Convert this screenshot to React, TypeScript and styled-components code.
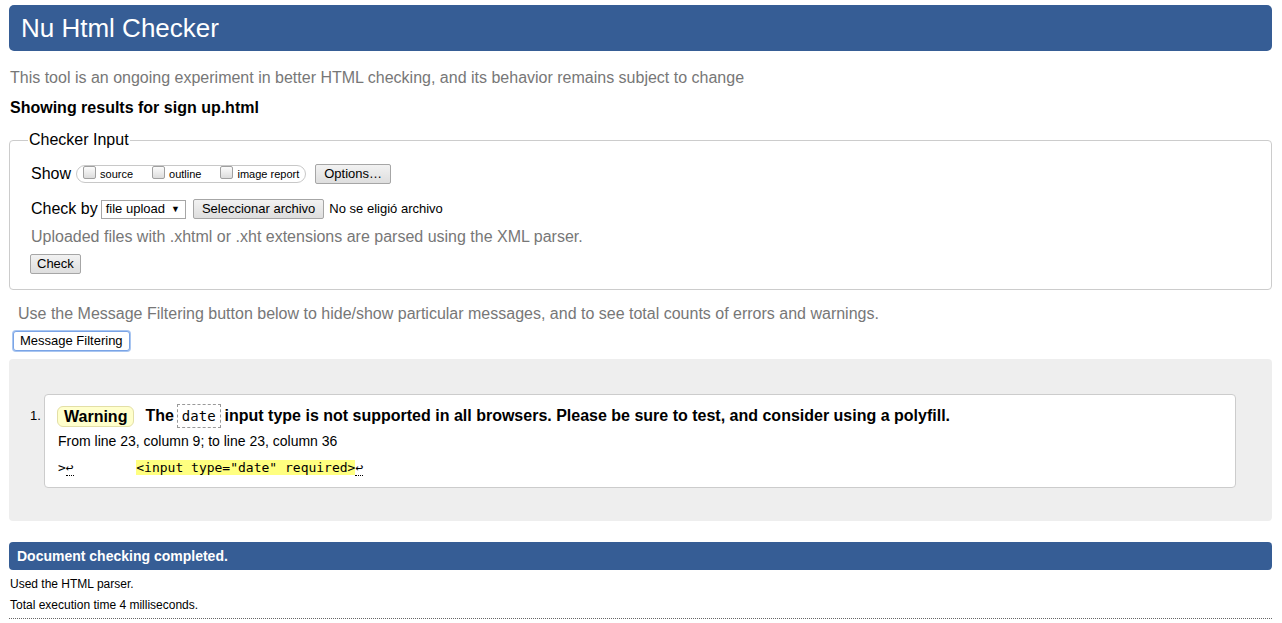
import React from 'react';
import styled, { createGlobalStyle } from 'styled-components';

const Global = createGlobalStyle`
  html, body { margin: 0; padding: 0; background: #fff; }
  body { font-family: "Liberation Sans", Arial, sans-serif; color: #000; }
`;

const Page = styled.div`
  padding: 5px 10px 0 9px;
`;

const Header = styled.h1`
  margin: 0;
  height: 46px;
  display: flex;
  align-items: center;
  padding-left: 12px;
  background: #365d95;
  border-radius: 5px;
  color: #fff;
  font-size: 26px;
  font-weight: normal;
`;

const Para = styled.p<{ $top: number; $left?: number; $muted?: boolean; $bold?: boolean }>`
  margin: ${(p) => p.$top}px 0 0 ${(p) => p.$left ?? 1}px;
  font-size: 16px;
  line-height: 20px;
  color: ${(p) => (p.$muted ? '#777' : '#000')};
  font-weight: ${(p) => (p.$bold ? 'bold' : 'normal')};
`;

const Fieldset = styled.fieldset`
  margin: 13px 0 0;
  padding: 0 20px 15px 21px;
  border: 1px solid #ccc;
  border-radius: 4px;
`;

const Legend = styled.legend`
  font-size: 16px;
  line-height: 18px;
  padding: 0 1px;
  margin-left: -3px;
`;

const Row = styled.div<{ $top: number }>`
  display: flex;
  align-items: center;
  margin-top: ${(p) => p.$top}px;
  font-size: 16px;
  line-height: 20px;
`;

const Pill = styled.span`
  display: inline-flex;
  align-items: center;
  gap: 19px;
  height: 16px;
  margin-left: 5px;
  padding: 0 6px;
  border: 1px solid #c8c8c8;
  border-radius: 9px;
`;

const Opt = styled.label`
  display: inline-flex;
  align-items: center;
  font-size: 11px;
  line-height: 14px;
`;

const Box = styled.span`
  display: inline-block;
  width: 11px;
  height: 11px;
  margin-right: 4px;
  margin-top: -3px;
  border: 1px solid #a0a0a0;
  border-radius: 2px;
  background: linear-gradient(#fcfcfc, #dcdcdc);
`;

const Button = styled.button<{ $left?: number; $pad?: number; $focus?: boolean }>`
  margin: 0 0 0 ${(p) => p.$left ?? 0}px;
  height: 20px;
  padding: 0 ${(p) => p.$pad ?? 6}px;
  font-family: "Liberation Sans", Arial, sans-serif;
  font-size: 13px;
  line-height: 16px;
  color: #000;
  background: ${(p) => (p.$focus ? '#fff' : 'linear-gradient(#f2f2f2, #dedede)')};
  border: 1px solid ${(p) => (p.$focus ? '#7aa4e6' : '#a6a6a6')};
  box-shadow: ${(p) => (p.$focus ? '0 0 0 1px #a9c6f1' : 'none')};
  border-radius: ${(p) => (p.$focus ? '3px' : '2px')};
`;

const Select = styled.span`
  display: inline-flex;
  align-items: center;
  gap: 6px;
  height: 17px;
  margin-left: 3px;
  padding: 0 5px 0 4px;
  border: 1px solid #a6a6a6;
  background: #fff;
  font-size: 13px;
`;

const Arrow = styled.span`
  font-size: 9px;
`;

const Small = styled.span`
  margin-left: 5px;
  font-size: 13px;
`;

const CheckRow = styled.div`
  margin-top: 7px;
  margin-left: -1px;
`;

const Results = styled.div`
  margin-top: 8px;
  display: flex;
  padding: 35px 36px 33px 21px;
  background: #eee;
  border-radius: 4px;
`;

const Marker = styled.span`
  width: 14px;
  padding-top: 14px;
  font-size: 13px;
`;

const Card = styled.div`
  flex: 1;
  padding: 9px 12px 11px 12px;
  background: #fff;
  border: 1px solid #ccc;
  border-radius: 4px;
`;

const Title = styled.div`
  display: flex;
  align-items: center;
  font-size: 16px;
  font-weight: bold;
  line-height: 24px;
`;

const Badge = styled.span`
  display: inline-block;
  height: 19px;
  line-height: 19px;
  padding: 0 6px;
  margin-right: 11px;
  background: #ffc;
  border: 1px solid #e3dfa6;
  border-radius: 6px;
`;

const Code = styled.code`
  display: inline-block;
  height: 22px;
  line-height: 22px;
  margin: 0 4px 0 3px;
  padding: 0 4px;
  border: 1px dashed #999;
  font-family: "DejaVu Sans Mono", "Liberation Mono", monospace;
  font-size: 14px;
  font-weight: normal;
`;

const Location = styled.p`
  margin: 3px 0 0 1px;
  font-size: 14px;
  line-height: 20px;
`;

const Extract = styled.pre`
  margin: 9px 0 0 1px;
  font-family: "DejaVu Sans Mono", "Liberation Mono", monospace;
  font-size: 13px;
  line-height: 16px;
`;

const Ret = styled.abbr`
  text-decoration: none;
  border-bottom: 1px dotted #000;
`;

const Mark = styled.b`
  font-weight: normal;
  background: #ffff80;
`;

const Done = styled.div`
  margin-top: 21px;
  height: 28px;
  display: flex;
  align-items: center;
  padding-left: 8px;
  background: #365d95;
  border-radius: 4px;
  color: #fff;
  font-size: 14px;
  font-weight: bold;
`;

const Stats = styled.div`
  padding: 4px 0 2px 1px;
  border-bottom: 1px dotted #666;
  font-size: 12px;
  line-height: 21px;
`;

export default function App() {
  return (
    <>
      <Global />
      <Page>
        <Header>Nu Html Checker</Header>
        <Para $top={17} $muted>
          This tool is an ongoing experiment in better HTML checking, and its behavior remains subject to change
        </Para>
        <Para $top={10} $bold>Showing results for sign up.html</Para>
        <Fieldset>
          <Legend>Checker Input</Legend>
          <Row $top={15}>
            Show
            <Pill>
              <Opt><Box />source</Opt>
              <Opt><Box />outline</Opt>
              <Opt><Box />image report</Opt>
            </Pill>
            <Button $left={9} $pad={8}>Options…</Button>
          </Row>
          <Row $top={15}>
            Check by
            <Select>file upload <Arrow>▼</Arrow></Select>
            <Button $left={7} $pad={8}>Seleccionar archivo</Button>
            <Small>No se eligió archivo</Small>
          </Row>
          <Para $top={8} $left={0} $muted>
            Uploaded files with .xhtml or .xht extensions are parsed using the XML parser.
          </Para>
          <CheckRow>
            <Button>Check</Button>
          </CheckRow>
        </Fieldset>
        <Para $top={14} $left={9} $muted>
          Use the Message Filtering button below to hide/show particular messages, and to see total counts of errors and warnings.
        </Para>
        <CheckRow>
          <Button $left={5} $focus>Message Filtering</Button>
        </CheckRow>
        <Results>
          <Marker>1.</Marker>
          <Card>
            <Title>
              <Badge>Warning</Badge>
              The<Code>date</Code>input type is not supported in all browsers. Please be sure to test, and consider using a polyfill.
            </Title>
            <Location>From line 23, column 9; to line 23, column 36</Location>
            <Extract>
              {'>'}<Ret title="Line break">↩</Ret>{'        '}
              <Mark>{'<input type="date" required>'}</Mark>
              <Ret title="Line break">↩</Ret>
            </Extract>
          </Card>
        </Results>
        <Done>Document checking completed.</Done>
        <Stats>
          Used the HTML parser.
          <br />
          Total execution time 4 milliseconds.
        </Stats>
      </Page>
    </>
  );
}
